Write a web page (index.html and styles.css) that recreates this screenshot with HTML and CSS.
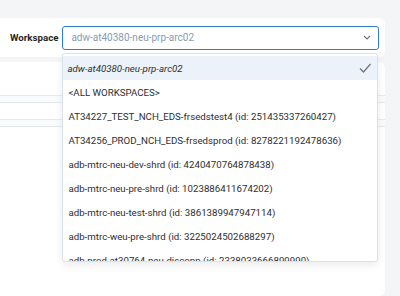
FILE: index.html
```html
<!DOCTYPE html>
<html lang="en">
<head>
  <meta charset="UTF-8">
  <title>Workspace</title>
  <link rel="stylesheet" href="styles.css">
</head>
<body>
<div class="filter-card">
  <label class="filter-label" for="workspace">Workspace</label>
  <div class="select">
    <span class="select-value">adw-at40380-neu-prp-arc02</span>
    <svg class="chevron" width="8" height="5" viewBox="0 0 8 5"><path d="M1 1l3 3 3-3" fill="none" stroke="#6b7785" stroke-width="1.2"/></svg>
    <ul class="menu">
      <li class="option selected">adw-at40380-neu-prp-arc02
        <svg class="check" width="12" height="10" viewBox="0 0 12 10"><path d="M1 5.5l3.5 3.5 7-8" fill="none" stroke="#6b7785" stroke-width="1.3"/></svg>
      </li>
      <li class="option">&lt;ALL WORKSPACES&gt;</li>
      <li class="option">AT34227_TEST_NCH_EDS-frsedstest4 (id: 251435337260427)</li>
      <li class="option">AT34256_PROD_NCH_EDS-frsedsprod (id: 8278221192478636)</li>
      <li class="option">adb-mtrc-neu-dev-shrd (id: 4240470764878438)</li>
      <li class="option">adb-mtrc-neu-pre-shrd (id: 1023886411674202)</li>
      <li class="option">adb-mtrc-neu-test-shrd (id: 3861389947947114)</li>
      <li class="option">adb-mtrc-weu-pre-shrd (id: 3225024502688297)</li>
      <li class="option">adb-prod-at30764-neu-discopp (id: 2338033666899990)</li>
    </ul>
  </div>
</div>
<div class="content-card">
  <div class="field-row"></div>
  <div class="field-row"></div>
</div>
</body>
</html>
```

FILE: styles.css
```css
body {
  font-family: Roboto, 'Noto Sans', sans-serif;
  margin: 0;
  padding: 18px 15px 0 0;
  background-color: #f4f5f7;
  color: #333;
  overflow: hidden;
  height: 296px;
  box-sizing: border-box;
}
.filter-card {
  display: flex;
  align-items: center;
  gap: 4px;
  height: 39px;
  margin-left: -6px;
  padding: 0 6px 0 16px;
  background-color: #fff;
  border-radius: 6px;
}
.filter-label {
  font-size: 9.7px;
  font-weight: 700;
  color: #1f1f1f;
}
.select {
  position: relative;
  flex: 1;
  display: flex;
  align-items: center;
  justify-content: space-between;
  height: 22px;
  padding: 0 7px 0 8px;
  border: 1px solid #2f7dcc;
  border-radius: 3px;
}
.select-value {
  font-size: 10px;
  color: #8a9cb1;
}
.menu {
  position: absolute;
  top: 26px;
  left: -1px;
  right: 0;
  height: 205px;
  margin: 0;
  padding: 2px 0 0;
  list-style: none;
  background-color: #fff;
  border: 1px solid #dde2e8;
  border-radius: 3px;
  box-shadow: 0 3px 8px rgba(0, 0, 0, 0.08);
  overflow: hidden;
  z-index: 2;
}
.option {
  display: flex;
  align-items: center;
  justify-content: space-between;
  height: 24px;
  padding: 1px 6px 0 5px;
  box-sizing: border-box;
  font-size: 9.7px;
  white-space: nowrap;
  color: #2e2e2e;
}
.option.selected {
  background-color: #ecf2f9;
  font-style: italic;
  padding-left: 4px;
}
.content-card {
  margin-top: 5px;
  margin-left: -6px;
  height: 234px;
  box-sizing: border-box;
  padding-top: 33px;
  background-color: #fff;
  border-radius: 6px;
}
.field-row {
  height: 6px;
  margin-bottom: 16px;
  border-top: 1px solid #e6e9ed;
  border-bottom: 1px solid #e6e9ed;
  background-color: #fafbfc;
}
```
